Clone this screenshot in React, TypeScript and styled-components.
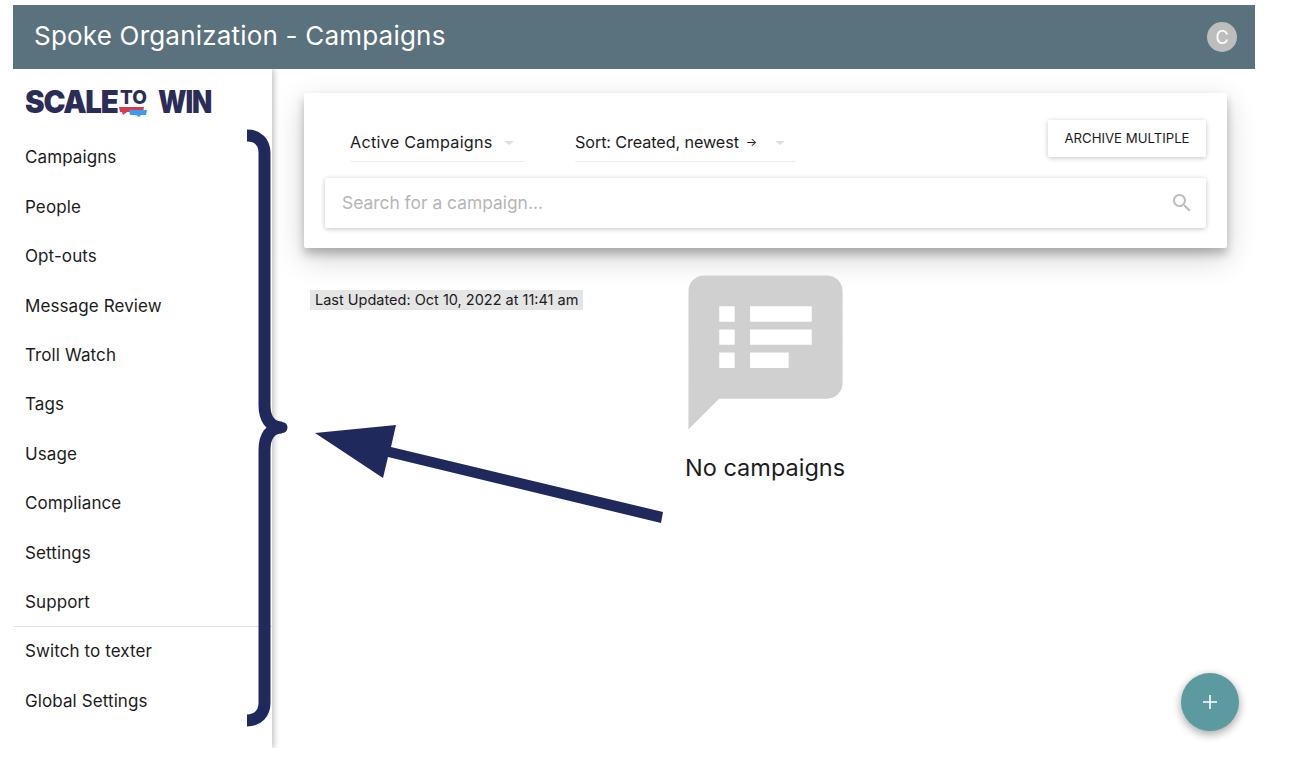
import React from "react";
import styled, { createGlobalStyle } from "styled-components";

const NAV_ITEMS = [
  "Campaigns",
  "People",
  "Opt-outs",
  "Message Review",
  "Troll Watch",
  "Tags",
  "Usage",
  "Compliance",
  "Settings",
  "Support",
];

const App = () => {
  return (
    <>
      <GlobalStyle />
      <Frame>
        <Header>
          <Title>Spoke Organization - Campaigns</Title>
          <Avatar>C</Avatar>
        </Header>
        <Body>
          <Sidebar>
            <Logo>
              <LogoWord $width={92} $scale={0.95}>SCALE</LogoWord>
              <LogoTo>
                <span>TO</span>
                <svg width="29" height="12" viewBox="0 0 29 12">
                  <path d="M0 0h25l-1 5H8L4 8 3 5H1z" fill="#d9394a" />
                  <path d="M10 3h18l-1 5h-5l-2 2-3-2h-6z" fill="#3d9bf0" />
                </svg>
              </LogoTo>
              <LogoWord $width={52} $scale={0.85}>WIN</LogoWord>
            </Logo>
            {NAV_ITEMS.map((item) => (
              <NavItem key={item}>{item}</NavItem>
            ))}
            <Divider />
            <NavItem>Switch to texter</NavItem>
            <NavItem>Global Settings</NavItem>
          </Sidebar>
          <Main>
            <Card>
              <FilterRow>
                <Select $width={175} $spacing={0.25}>
                  Active Campaigns
                  <Caret />
                </Select>
                <Select $width={221} $spacing={-0.1}>
                  Sort: Created, newest<SmallArrow>→</SmallArrow>
                  <Caret />
                </Select>
                <ArchiveButton>ARCHIVE MULTIPLE</ArchiveButton>
              </FilterRow>
              <SearchBar>
                <SearchInput placeholder="Search for a campaign..." />
                <svg width="24" height="24" viewBox="0 0 24 24" fill="#bdbdbd">
                  <path d="M15.5 14h-.79l-.28-.27C15.41 12.59 16 11.11 16 9.5 16 5.91 13.09 3 9.5 3S3 5.91 3 9.5 5.91 16 9.5 16c1.61 0 3.09-.59 4.23-1.57l.27.28v.79l5 4.99L20.49 19l-4.99-5zm-6 0C7.01 14 5 11.99 5 9.5S7.01 5 9.5 5 14 7.01 14 9.5 11.99 14 9.5 14z" />
                </svg>
              </SearchBar>
            </Card>
            <ResultRow>
              <LastUpdated>Last Updated: Oct 10, 2022 at 11:41 am</LastUpdated>
              <EmptyState>
                <svg width="185" height="185" viewBox="0 0 24 24" fill="#d0d0d0">
                  <path d="M20 2H4c-1.1 0-1.99.9-1.99 2L2 22l4-4h14c1.1 0 2-.9 2-2V4c0-1.1-.9-2-2-2zM8 14H6v-2h2v2zm0-3H6V9h2v2zm0-3H6V6h2v2zm7 6h-5v-2h5v2zm3-3h-8V9h8v2zm0-3h-8V6h8v2z" />
                </svg>
                <EmptyText>No campaigns</EmptyText>
              </EmptyState>
            </ResultRow>
          </Main>
        </Body>
        <Fab>
          <svg width="18" height="18" viewBox="0 0 18 18" stroke="#fff" strokeWidth="1.6">
            <path d="M9 2v14M2 9h14" />
          </svg>
        </Fab>
      </Frame>
      <Annotations width="1300" height="758" viewBox="0 0 1300 758">
        <path
          d="M247 135.500C258 135.500 264.500 142 264.500 153V405C264.500 418 270 427.500 282 427.500C270 427.500 264.500 437 264.500 450V703C264.500 713 258 720.500 247 720.500"
          fill="none"
          stroke="#20295c"
          strokeWidth="12"
          strokeLinecap="butt"
        />
        <circle cx="282" cy="427.500" r="5.500" fill="#20295c" />
        <polygon points="315,433 396,425 391,447 663,512 661,523 388,457 383,478" fill="#20295c" />
      </Annotations>
    </>
  );
};

const GlobalStyle = createGlobalStyle`
  html, body {
    margin: 0;
    padding: 0;
    background: #fff;
    overflow: hidden;
  }
  body {
    font-family: Inter, "Liberation Sans", sans-serif;
    color: #1c1c1c;
  }
`;

const Frame = styled.div`
  position: relative;
  display: flex;
  flex-direction: column;
  width: 1242px;
  height: 743px;
  margin: 5px 0 0 13px;
`;

const Header = styled.header`
  display: flex;
  align-items: center;
  justify-content: space-between;
  flex: none;
  height: 64px;
  padding: 0 18px 0 21px;
  background: #5a717e;
  color: #fff;
`;

const Title = styled.h1`
  margin: 0 0 3px;
  font-size: 26px;
  font-weight: 400;
  letter-spacing: 0.2px;
`;

const Avatar = styled.div`
  display: flex;
  align-items: center;
  justify-content: center;
  width: 30px;
  height: 30px;
  border-radius: 50%;
  background: #bdbdbd;
  color: #fff;
  font-size: 18px;
`;

const Body = styled.div`
  display: flex;
  flex: 1;
  min-height: 0;
`;

const Sidebar = styled.nav`
  flex: none;
  width: 259px;
  box-shadow: 2px 0 6px rgba(0, 0, 0, 0.25);
  clip-path: inset(0 -10px 0 0);
`;

const Logo = styled.div`
  display: flex;
  align-items: flex-start;
  height: 63.300px;
  padding: 15px 0 0 12px;
  box-sizing: border-box;
  color: #2b2d57;
`;

const LogoWord = styled.span<{ $width: number; $scale: number }>`
  flex: none;
  width: ${(p) => p.$width}px;
  font-size: 31px;
  font-weight: 900;
  line-height: 36px;
  letter-spacing: -1.300px;
  white-space: nowrap;
  transform: scaleX(${(p) => p.$scale});
  transform-origin: left center;
`;

const LogoTo = styled.span`
  display: flex;
  flex: none;
  flex-direction: column;
  align-items: center;
  width: 29px;
  margin: 0 10px 0 2px;
  padding-top: 4px;
  font-size: 19px;
  font-weight: 800;
  line-height: 19px;

  svg {
    display: block;
  }
`;

const NavItem = styled.div`
  display: flex;
  align-items: center;
  height: 49.400px;
  padding: 1px 0 0 12px;
  box-sizing: border-box;
  font-size: 17px;
  letter-spacing: 0.1px;
`;

const Divider = styled.hr`
  height: 1px;
  margin: 0 0 -1px;
  border: 0;
  background: #e0e0e0;
`;

const Main = styled.main`
  flex: 1;
  min-width: 0;
  padding: 24px 28px 0 32px;
`;

const Card = styled.section`
  display: flex;
  flex-direction: column;
  height: 155px;
  padding: 27px 21px 0;
  box-sizing: border-box;
  background: #fff;
  border-radius: 2px;
  box-shadow: rgba(0, 0, 0, 0.19) 0 10px 30px, rgba(0, 0, 0, 0.23) 0 6px 10px;
`;

const FilterRow = styled.div`
  display: flex;
  align-items: flex-start;
  gap: 50px;
  height: 58px;
  padding-left: 25px;
`;

const Select = styled.div<{ $width: number; $spacing: number }>`
  display: flex;
  align-items: center;
  position: relative;
  width: ${(p) => p.$width}px;
  height: 42px;
  padding-top: 2px;
  box-sizing: border-box;
  border-bottom: 1px solid #eeeeee;
  font-size: 16.200px;
  letter-spacing: ${(p) => p.$spacing}px;
  white-space: pre;
`;

const SmallArrow = styled.span`
  margin-left: 7px;
  font-size: 12px;
`;

const Caret = styled.span`
  position: absolute;
  right: 11px;
  top: 21px;
  border-style: solid;
  border-width: 4px 5px 0;
  border-color: #e0e0e0 transparent transparent;
`;

const ArchiveButton = styled.button`
  margin-left: auto;
  width: 158px;
  height: 37px;
  padding: 0 0 2px;
  border: 0;
  border-radius: 2px;
  background: #fff;
  color: #1c1c1c;
  font-family: inherit;
  font-size: 13.200px;
  box-shadow: rgba(0, 0, 0, 0.12) 0 1px 6px, rgba(0, 0, 0, 0.12) 0 1px 4px;
`;

const SearchBar = styled.div`
  display: flex;
  align-items: center;
  height: 50px;
  padding: 0 12px 0 17px;
  box-sizing: border-box;
  border-radius: 2px;
  box-shadow: rgba(0, 0, 0, 0.12) 0 1px 6px, rgba(0, 0, 0, 0.12) 0 1px 4px;
`;

const SearchInput = styled.input`
  flex: 1;
  min-width: 0;
  padding: 0 0 2px;
  border: 0;
  outline: 0;
  background: transparent;
  font-family: inherit;
  font-size: 17.400px;

  &::placeholder {
    color: #b6b6b6;
  }
`;

const ResultRow = styled.div`
  display: flex;
  align-items: flex-start;
  gap: 89.600px;
  margin-top: 11.600px;
`;

const LastUpdated = styled.div`
  flex: none;
  width: 273px;
  height: 20px;
  margin: 30.400px 0 0 6px;
  padding-left: 5px;
  box-sizing: border-box;
  background: #e5e5e5;
  font-size: 14.500px;
  line-height: 20px;
  white-space: nowrap;
`;

const EmptyState = styled.div`
  display: flex;
  flex-direction: column;
  align-items: center;
  width: 185px;
`;

const EmptyText = styled.div`
  margin-top: 8px;
  font-size: 23.500px;
  line-height: 30px;
  white-space: nowrap;
`;

const Fab = styled.button`
  position: absolute;
  left: 1168px;
  top: 668px;
  display: flex;
  align-items: center;
  justify-content: center;
  width: 58px;
  height: 58px;
  padding: 0;
  border: 0;
  border-radius: 50%;
  background: #5b9a9e;
  box-shadow: rgba(0, 0, 0, 0.16) 0 3px 10px, rgba(0, 0, 0, 0.23) 0 3px 10px;
`;

const Annotations = styled.svg`
  position: absolute;
  left: 0;
  top: 0;
  pointer-events: none;
`;

export default App;
